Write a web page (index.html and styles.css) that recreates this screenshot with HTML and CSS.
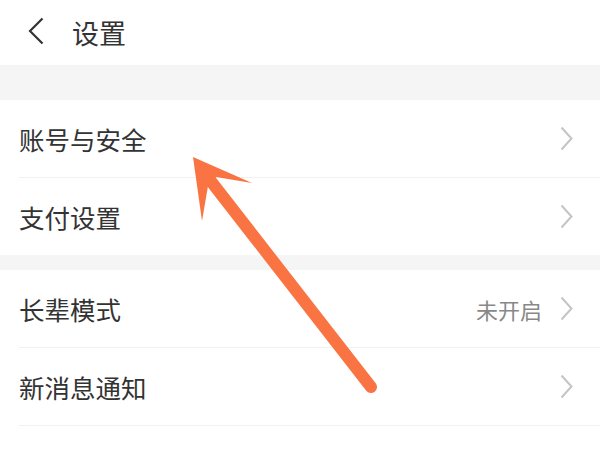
FILE: index.html
```html
<!DOCTYPE html>
<html lang="zh">
<head>
<meta charset="utf-8">
<title>设置</title>
<link rel="stylesheet" href="styles.css">
</head>
<body>
<div class="page">
  <header class="topbar">
    <svg class="back" width="17" height="28" viewBox="0 0 17 28"><polyline points="15.5,1.5 3,14 15.5,26.5" fill="none" stroke="#333" stroke-width="2.2" stroke-linejoin="miter"/></svg>
    <h1 class="title">设置</h1>
  </header>
  <div class="band band-lg"></div>
  <section class="group">
    <div class="row"><span class="label">账号与安全</span><span class="right"><svg class="chev" width="13" height="25" viewBox="0 0 13 25"><polyline points="1.5,1.5 11.5,12.5 1.5,23.5" fill="none" stroke="#c4c4c4" stroke-width="2"/></svg></span></div>
    <div class="row"><span class="label">支付设置</span><span class="right"><svg class="chev" width="13" height="25" viewBox="0 0 13 25"><polyline points="1.5,1.5 11.5,12.5 1.5,23.5" fill="none" stroke="#c4c4c4" stroke-width="2"/></svg></span></div>
  </section>
  <div class="band band-sm"></div>
  <section class="group">
    <div class="row"><span class="label">长辈模式</span><span class="right"><span class="value">未开启</span><svg class="chev" width="13" height="25" viewBox="0 0 13 25"><polyline points="1.5,1.5 11.5,12.5 1.5,23.5" fill="none" stroke="#c4c4c4" stroke-width="2"/></svg></span></div>
    <div class="row"><span class="label">新消息通知</span><span class="right"><svg class="chev" width="13" height="25" viewBox="0 0 13 25"><polyline points="1.5,1.5 11.5,12.5 1.5,23.5" fill="none" stroke="#c4c4c4" stroke-width="2"/></svg></span></div>
    <div class="row"></div>
  </section>
  <svg class="arrow" width="600" height="450" viewBox="0 0 600 450">
    <line x1="210" y1="180" x2="371" y2="387" stroke="#f97442" stroke-width="12" stroke-linecap="round"/>
    <polygon points="193,157 252,183 216,177 208,186 202,221" fill="#f97442"/>
  </svg>
</div>
</body>
</html>
```
FILE: styles.css
```css
html, body {
  margin: 0;
  padding: 0;
  background: #ffffff;
}
body {
  font-family: "Noto Sans CJK SC", "Noto Sans", sans-serif;
  color: #333333;
  overflow: hidden;
}
.page {
  position: relative;
  width: 600px;
  height: 450px;
  overflow: hidden;
}
.topbar {
  height: 65px;
  display: flex;
  align-items: center;
  padding-left: 27px;
}
.back {
  display: block;
  margin-top: -4px;
}
.title {
  margin: 0 0 0 28px;
  font-size: 27px;
  font-weight: 400;
  line-height: 1;
  color: #333333;
}
.band {
  background: #f5f5f5;
}
.band-lg {
  height: 35px;
}
.band-sm {
  height: 15px;
}
.group {
  padding-left: 19px;
}
.row {
  height: 77px;
  display: flex;
  align-items: center;
  justify-content: space-between;
  padding-right: 27px;
  border-bottom: 1px solid #f1f1f1;
}
.row:last-child {
  border-bottom: none;
}
.label {
  font-size: 25.5px;
  line-height: 1;
  color: #333333;
}
.right {
  display: flex;
  align-items: center;
}
.value {
  font-size: 22px;
  color: #888888;
  margin-right: 18px;
  line-height: 1;
}
.chev {
  display: block;
}
.arrow {
  position: absolute;
  left: 0;
  top: 0;
  pointer-events: none;
}
```
